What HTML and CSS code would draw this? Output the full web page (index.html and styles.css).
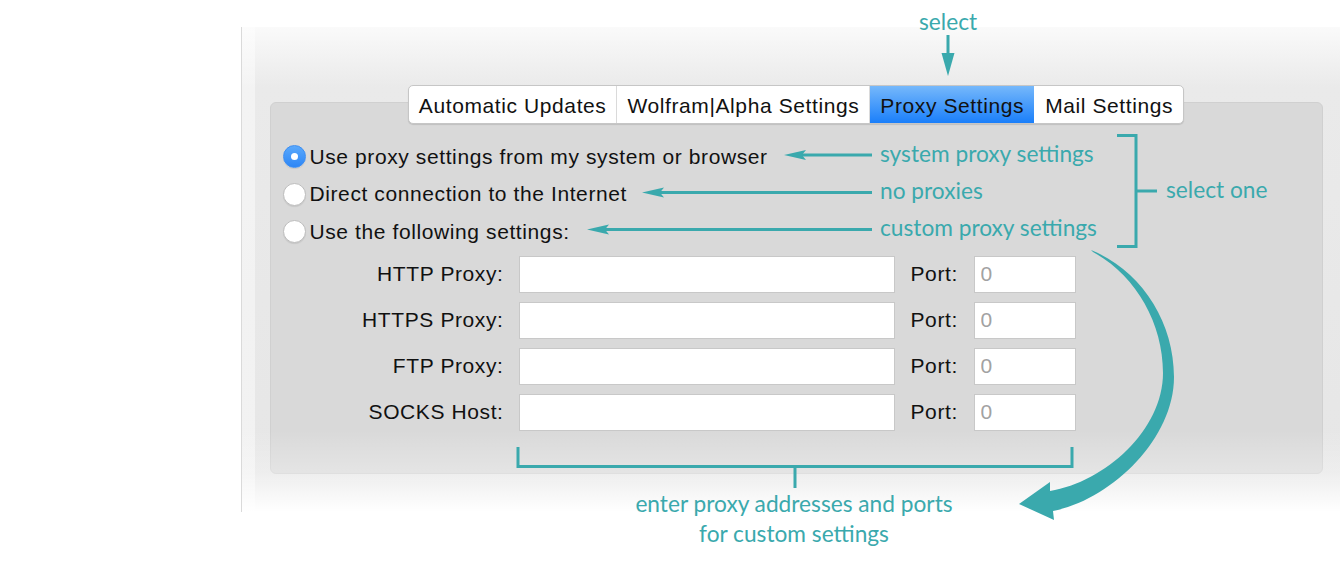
FILE: index.html
```html
<!DOCTYPE html>
<html lang="en">
<head>
    <meta charset="UTF-8">
    <title>Proxy Settings</title>
    <link rel="stylesheet" href="styles.css">
</head>
<body>
<div class="page">
  <div class="window">
    <div class="tabs">
      <div class="tab">Automatic Updates</div>
      <div class="tab">Wolfram|Alpha Settings</div>
      <div class="tab tab-active">Proxy Settings</div>
      <div class="tab">Mail Settings</div>
    </div>
    <div class="group">
      <div class="radios">
        <div class="radio-row"><span class="radio radio-on"></span>Use proxy settings from my system or browser</div>
        <div class="radio-row"><span class="radio"></span>Direct connection to the Internet</div>
        <div class="radio-row"><span class="radio"></span>Use the following settings:</div>
      </div>
      <div class="fields">
        <div class="field-label">HTTP Proxy:</div>
        <input class="field" type="text">
        <div class="port-label">Port:</div>
        <input class="port" type="text" placeholder="0">

        <div class="field-label">HTTPS Proxy:</div>
        <input class="field" type="text">
        <div class="port-label">Port:</div>
        <input class="port" type="text" placeholder="0">

        <div class="field-label">FTP Proxy:</div>
        <input class="field" type="text">
        <div class="port-label">Port:</div>
        <input class="port" type="text" placeholder="0">

        <div class="field-label">SOCKS Host:</div>
        <input class="field" type="text">
        <div class="port-label">Port:</div>
        <input class="port" type="text" placeholder="0">
      </div>
    </div>
    <div class="fade"></div>
  </div>

  <!-- callouts drawn over the dialog -->
  <div class="notes">
    <svg class="marks" width="1340" height="564" viewBox="0 0 1340 564">
      <g stroke="#3aa9ad" stroke-width="3" fill="none">
        <line x1="948" y1="35" x2="948" y2="57"/>
        <line x1="800" y1="155" x2="872" y2="155"/>
        <line x1="658" y1="192.5" x2="872" y2="192.5"/>
        <line x1="602" y1="229.5" x2="872" y2="229.5"/>
        <polyline points="1117,135.5 1136,135.5 1136,246.5 1117,246.5"/>
        <line x1="1136" y1="191" x2="1157" y2="191"/>
        <polyline points="518,447 518,466.5 1072,466.5 1072,447"/>
        <line x1="795" y1="466.5" x2="795" y2="488"/>
      </g>
      <g fill="#3aa9ad">
        <polygon points="941.5,53 954.5,53 948,76"/>
        <polygon points="784,155 806,150 802,155 806,160"/>
        <polygon points="642,192.5 664,187.5 660,192.5 664,197.5"/>
        <polygon points="587,229.5 609,224.5 605,229.5 609,234.5"/>
        <path d="M1091,250 C1140,270 1174,320 1174,377 C1174,440 1110,500 1053,511 L1054,520 L1019,504 L1050,482 L1050,491 C1105,482 1163,430 1163,373 C1163,322 1135,275 1093,252 Z"/>
      </g>
    </svg>
    <span class="note note-select">select</span>
    <span class="note note-system">system proxy settings</span>
    <span class="note note-direct">no proxies</span>
    <span class="note note-custom">custom proxy settings</span>
    <span class="note note-one">select one</span>
    <span class="note note-enter">enter proxy addresses and ports<br>for custom settings</span>
  </div>
</div>
</body>
</html>
```

FILE: styles.css
```css
body {
  margin: 0;
  background: #fff;
  font-family: "Liberation Sans", Arial, sans-serif;
}

.page {
  position: relative;
  width: 1340px;
  height: 564px;
  overflow: hidden;
  box-sizing: border-box;
  padding: 27px 0 0 241px;
}

.window {
  position: relative;
  width: 1099px;
  height: 485px;
  box-sizing: border-box;
  padding: 58px 18px 38px 28px;
  display: flex;
  flex-direction: column;
  align-items: center;
  border-left: 1px solid #dadada;
  background:
    linear-gradient(to right, rgba(255,255,255,0.45) 0, rgba(255,255,255,0.45) 13px, transparent 13px),
    linear-gradient(to bottom, #fafafa 0, #eaeaea 60px, #e6e6e6 100%);
}

.tabs {
  position: relative;
  z-index: 1;
  display: flex;
  height: 39px;
  box-sizing: border-box;
  margin-bottom: -22px;
  border: 1px solid #c6c6c6;
  border-radius: 5px;
  background: #fff;
  overflow: hidden;
  box-shadow: 0 1px 1px rgba(0,0,0,0.12);
}

.tab {
  display: flex;
  align-items: center;
  padding: 2px 10px 0;
  font-size: 21px;
  letter-spacing: 0.6px;
  color: #111;
  white-space: nowrap;
}

.tab + .tab {
  border-left: 1px solid #dadada;
}

.tab-active {
  background: linear-gradient(to bottom, #76b8fb, #1a7ffa);
  border-left-color: transparent;
}

.tab-active + .tab {
  border-left-color: transparent;
}

.group {
  width: 1053px;
  height: 372px;
  box-sizing: border-box;
  padding: 35px 12px 0;
  border: 1px solid #d0d0d0;
  border-radius: 6px;
  background: #d9d9d9;
}

.radio-row {
  display: flex;
  align-items: center;
  height: 37.5px;
  font-size: 21px;
  letter-spacing: 0.6px;
  color: #111;
}

.radio {
  width: 23px;
  height: 23px;
  box-sizing: border-box;
  margin-right: 4px;
  border-radius: 50%;
  border: 1px solid #bdbdbd;
  background: #fff;
  box-shadow: 0 1px 1px rgba(0,0,0,0.08);
  flex: none;
}

.radio-on {
  position: relative;
  border-color: #3d8ef2;
  background: linear-gradient(to bottom, #5aa9fc, #2d86f6);
}

.radio-on::after {
  content: "";
  position: absolute;
  left: 7px;
  top: 7px;
  width: 7px;
  height: 7px;
  border-radius: 50%;
  background: #fff;
}

.fields {
  display: grid;
  grid-template-columns: 220px 376px 47px 102px;
  grid-auto-rows: 37px;
  column-gap: 16px;
  row-gap: 9px;
  margin-top: 5px;
  align-items: center;
}

.field-label,
.port-label {
  font-size: 21px;
  letter-spacing: 0.6px;
  color: #111;
  white-space: nowrap;
}

.field-label {
  text-align: right;
  margin-right: -1px;
}

.field,
.port {
  height: 37px;
  box-sizing: border-box;
  margin: 0;
  border: 1px solid #c8c8c8;
  background: #fff;
  font-family: "Liberation Sans", Arial, sans-serif;
  font-size: 21px;
  outline: none;
}

.field {
  width: 376px;
}

.port {
  width: 102px;
  padding: 0 0 0 6px;
}

.port::placeholder {
  color: #a2a2a2;
}

.fade {
  position: absolute;
  left: 0;
  right: 0;
  bottom: 0;
  height: 82px;
  background: linear-gradient(to bottom, rgba(255,255,255,0) 0, rgba(255,255,255,0.3) 52%, #fff 100%);
}

.notes {
  position: absolute;
  left: 0;
  top: 0;
  width: 1340px;
  height: 564px;
  pointer-events: none;
}

.marks {
  position: absolute;
  left: 0;
  top: 0;
}

.note {
  position: absolute;
  font-family: Lato, "Open Sans", sans-serif;
  font-size: 22.7px;
  line-height: 26px;
  color: #3aa9ad;
  white-space: nowrap;
}

.note-select { left: 919px; top: 9px; }
.note-system { left: 880px; top: 141px; }
.note-direct { left: 880px; top: 178px; }
.note-custom { left: 880px; top: 215px; }
.note-one { left: 1166px; top: 177px; }

.note-enter {
  left: 594px;
  top: 489px;
  width: 400px;
  line-height: 30px;
  text-align: center;
}
```
